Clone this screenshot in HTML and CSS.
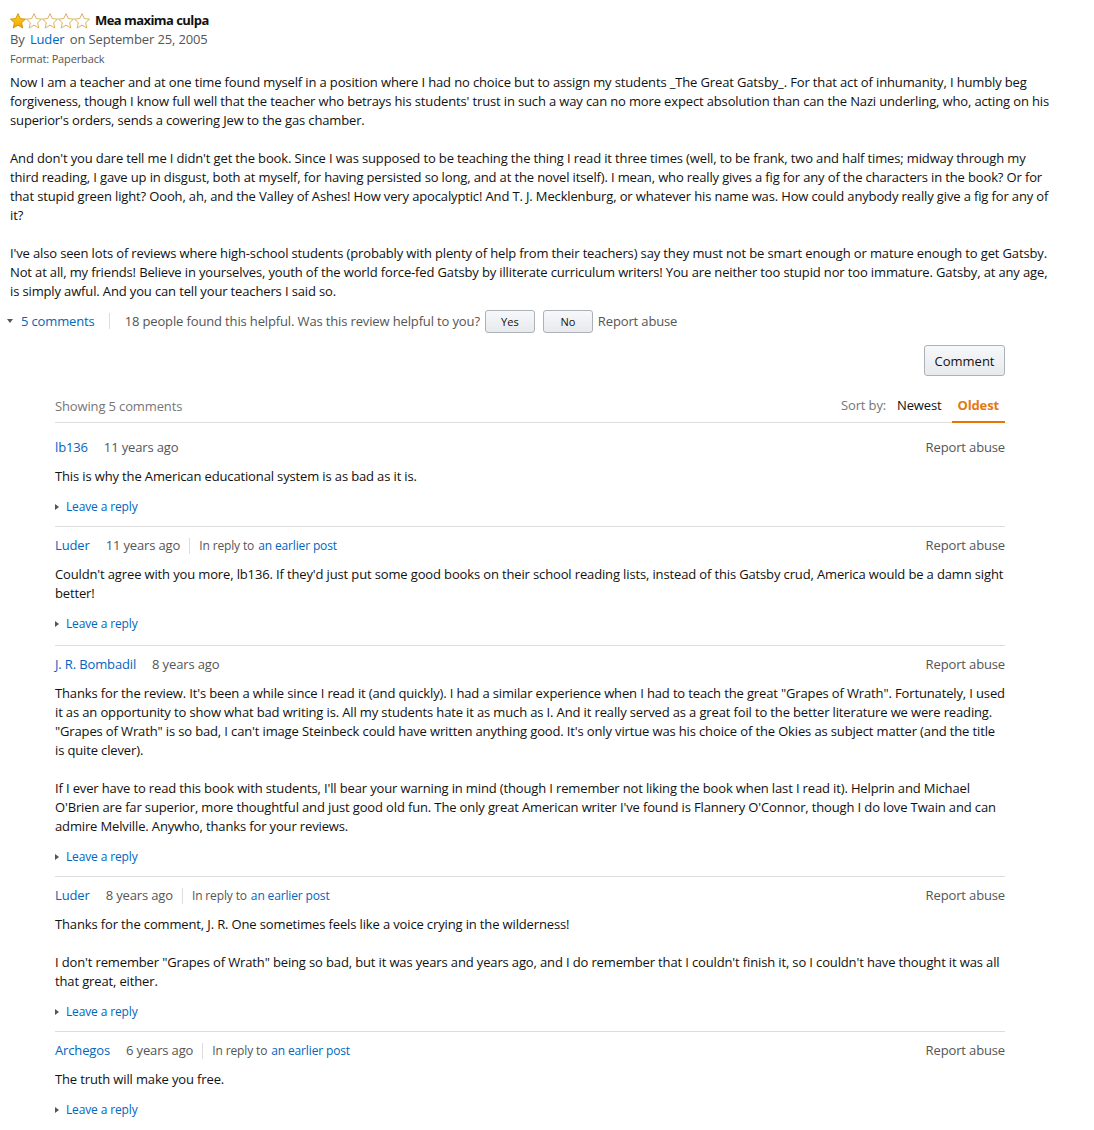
FILE: index.html
```html
<!DOCTYPE html>
<html>
<head>
<meta charset="utf-8">
<link rel="stylesheet" href="styles.css">
</head>
<body>
<div class="review">
  <div class="title-row">
    <span class="stars">
      <svg width="80" height="16" viewBox="0 0 80 16">
        <defs>
          <linearGradient id="gf" x1="0" y1="0" x2="0" y2="1"><stop offset="0" stop-color="#ffd21a"/><stop offset="1" stop-color="#f3a500"/></linearGradient>
        </defs>
        <path d="M8 0.6l2.3 5 5.3.5-4 3.6 1.2 5.3L8 12.2l-4.8 2.8 1.2-5.3-4-3.6 5.3-.5z" fill="url(#gf)" stroke="#c98a00" stroke-width="0.8" stroke-linejoin="round"/>
        <g fill="none" stroke="#d8a94e" stroke-width="0.9" stroke-linejoin="round">
          <path transform="translate(16 0)" d="M8 0.6l2.3 5 5.3.5-4 3.6 1.2 5.3L8 12.2l-4.8 2.8 1.2-5.3-4-3.6 5.3-.5z"/>
          <path transform="translate(32 0)" d="M8 0.6l2.3 5 5.3.5-4 3.6 1.2 5.3L8 12.2l-4.8 2.8 1.2-5.3-4-3.6 5.3-.5z"/>
          <path transform="translate(48 0)" d="M8 0.6l2.3 5 5.3.5-4 3.6 1.2 5.3L8 12.2l-4.8 2.8 1.2-5.3-4-3.6 5.3-.5z"/>
          <path transform="translate(64 0)" d="M8 0.6l2.3 5 5.3.5-4 3.6 1.2 5.3L8 12.2l-4.8 2.8 1.2-5.3-4-3.6 5.3-.5z"/>
        </g>
      </svg>
    </span>
    <span class="title">Mea maxima culpa</span>
  </div>
  <div class="byline">By <a class="link">Luder</a> on September 25, 2005</div>
  <div class="format">Format: Paperback</div>
  <div class="body">
    <p>Now I am a teacher and at one time found myself in a position where I had no choice but to assign my students _The Great Gatsby_. For that act of inhumanity, I humbly beg forgiveness, though I know full well that the teacher who betrays his students' trust in such a way can no more expect absolution than can the Nazi underling, who, acting on his superior's orders, sends a cowering Jew to the gas chamber.</p>
    <p>And don't you dare tell me I didn't get the book. Since I was supposed to be teaching the thing I read it three times (well, to be frank, two and half times; midway through my third reading, I gave up in disgust, both at myself, for having persisted so long, and at the novel itself). I mean, who really gives a fig for any of the characters in the book? Or for that stupid green light? Oooh, ah, and the Valley of Ashes! How very apocalyptic! And T. J. Mecklenburg, or whatever his name was. How could anybody really give a fig for any of it?</p>
    <p>I've also seen lots of reviews where high-school students (probably with plenty of help from their teachers) say they must not be smart enough or mature enough to get Gatsby. Not at all, my friends! Believe in yourselves, youth of the world force-fed Gatsby by illiterate curriculum writers! You are neither too stupid nor too immature. Gatsby, at any age, is simply awful. And you can tell your teachers I said so.</p>
  </div>
  <div class="helpful-row">
    <a class="link toggle"><span class="tri-down"></span>5 comments</a>
    <span class="divider"></span>
    <span class="helpful">18 people found this helpful. Was this review helpful to you?</span>
    <button class="small-btn">Yes</button>
    <button class="small-btn">No</button>
    <span class="report">Report abuse</span>
  </div>
</div>

<div class="comments">
  <div class="comment-btn-row"><button class="comment-btn">Comment</button></div>
  <div class="sort-bar">
    <span class="showing">Showing 5 comments</span>
    <div class="sort">
      <span class="sort-label">Sort by:</span>
      <span class="sort-opt">Newest</span>
      <span class="sort-opt active">Oldest</span>
    </div>
  </div>

  <div class="comment first">
    <div class="c-head">
      <div class="c-meta"><a class="link">lb136</a><span class="age">11 years ago</span></div>
      <span class="report">Report abuse</span>
    </div>
    <div class="c-body"><p>This is why the American educational system is as bad as it is.</p></div>
    <div class="reply"><span class="tri-right"></span><a class="link">Leave a reply</a></div>
  </div>

  <div class="comment second">
    <div class="c-head">
      <div class="c-meta"><a class="link">Luder</a><span class="age">11 years ago</span><span class="vsep"></span><span class="inreply">In reply to</span><a class="link small">an earlier post</a></div>
      <span class="report">Report abuse</span>
    </div>
    <div class="c-body"><p>Couldn't agree with you more, lb136. If they'd just put some good books on their school reading lists, instead of this Gatsby crud, America would be a damn sight better!</p></div>
    <div class="reply"><span class="tri-right"></span><a class="link">Leave a reply</a></div>
  </div>

  <div class="comment">
    <div class="c-head">
      <div class="c-meta"><a class="link">J. R. Bombadil</a><span class="age">8 years ago</span></div>
      <span class="report">Report abuse</span>
    </div>
    <div class="c-body">
      <p>Thanks for the review. It's been a while since I read it (and quickly). I had a similar experience when I had to teach the great "Grapes of Wrath". Fortunately, I used it as an opportunity to show what bad writing is. All my students hate it as much as I. And it really served as a great foil to the better literature we were reading. "Grapes of Wrath" is so bad, I can't image Steinbeck could have written anything good. It's only virtue was his choice of the Okies as subject matter (and the title is quite clever).</p>
      <p>If I ever have to read this book with students, I'll bear your warning in mind (though I remember not liking the book when last I read it). Helprin and Michael O'Brien are far superior, more thoughtful and just good old fun. The only great American writer I've found is Flannery O'Connor, though I do love Twain and can admire Melville. Anywho, thanks for your reviews.</p>
    </div>
    <div class="reply"><span class="tri-right"></span><a class="link">Leave a reply</a></div>
  </div>

  <div class="comment">
    <div class="c-head">
      <div class="c-meta"><a class="link">Luder</a><span class="age">8 years ago</span><span class="vsep"></span><span class="inreply">In reply to</span><a class="link small">an earlier post</a></div>
      <span class="report">Report abuse</span>
    </div>
    <div class="c-body">
      <p>Thanks for the comment, J. R. One sometimes feels like a voice crying in the wilderness!</p>
      <p>I don't remember "Grapes of Wrath" being so bad, but it was years and years ago, and I do remember that I couldn't finish it, so I couldn't have thought it was all that great, either.</p>
    </div>
    <div class="reply"><span class="tri-right"></span><a class="link">Leave a reply</a></div>
  </div>

  <div class="comment last">
    <div class="c-head">
      <div class="c-meta"><a class="link">Archegos</a><span class="age">6 years ago</span><span class="vsep"></span><span class="inreply">In reply to</span><a class="link small">an earlier post</a></div>
      <span class="report">Report abuse</span>
    </div>
    <div class="c-body"><p>The truth will make you free.</p></div>
    <div class="reply"><span class="tri-right"></span><a class="link">Leave a reply</a></div>
  </div>
</div>
</body>
</html>
```

FILE: styles.css
```css
* { box-sizing: border-box; }
body {
  margin: 0;
  padding: 10px 44px 0 10px;
  font-family: "Open Sans", "Noto Sans", Arial, sans-serif;
  font-size: 13px;
  line-height: 19px;
  letter-spacing: -0.14px;
  color: #111;
  background: #fff;
}
p { margin: 0; }
.link { color: #0066c0; text-decoration: none; cursor: pointer; }

.title-row { display: flex; align-items: center; height: 19px; margin-top: 1px; }
.stars { display: inline-flex; width: 80px; height: 16px; margin-right: 5px; }
.title { font-weight: 700; font-size: 13px; color: #111; letter-spacing: -0.55px; }
.byline { color: #555; }
.byline .link { margin: 0 2px; }
.format { font-size: 11px; color: #555; line-height: 20px; }
.body { margin-top: 4px; }
.body p + p { margin-top: 19px; }

.helpful-row { display: flex; align-items: center; margin-top: 8px; height: 24px; color: #555; }
.toggle { display: inline-flex; align-items: center; }
.tri-down { width: 0; height: 0; border-left: 3px solid transparent; border-right: 3px solid transparent; border-top: 4px solid #555; margin: 0 8px 0 -3px; }
.divider { width: 1px; height: 16px; background: #ddd; margin: 0 15px 0 14px; }
.helpful { color: #555; margin-right: 5px; }
.small-btn {
  font-family: inherit; font-size: 11px; color: #111; letter-spacing: 0;
  height: 23px; width: 50px; margin-right: 8px;
  border: 1px solid #adb1b8; border-radius: 3px;
  background: linear-gradient(#f7f8fa, #e7e9ec);
  padding: 0;
}
.small-btn + .small-btn { margin-right: 5px; }
.report { color: #555; }

.comments { margin-left: 45px; margin-right: 45px; }
.comment-btn-row { display: flex; justify-content: flex-end; margin-top: 12px; }
.comment-btn {
  font-family: inherit; font-size: 13px; color: #111; letter-spacing: 0;
  height: 31px; width: 81px; padding: 0;
  border: 1px solid #adb1b8; border-radius: 3px;
  background: linear-gradient(#f7f8fa, #e7e9ec);
}
.sort-bar { display: flex; justify-content: space-between; align-items: flex-end; margin-top: 15px; border-bottom: 1px solid #ddd; height: 32px; }
.showing { color: #767676; line-height: 19px; padding-bottom: 6px; }
.sort { display: flex; align-items: flex-end; margin-bottom: -1px; }
.sort-label { color: #767676; padding-bottom: 8px; margin-right: 5px; }
.sort-opt { color: #111; padding: 0 6px 6px; border-bottom: 2px solid transparent; }
.sort-opt.active { color: #e47911; font-weight: 700; border-bottom: 2px solid #e77600; margin-left: 4px; }

.comment { border-bottom: 1px solid #ddd; padding: 9px 0 10px; }
.comment.first { padding-top: 15px; }
.comment.second { padding-bottom: 12px; }
.comment.last { border-bottom: none; }
.c-head { display: flex; justify-content: space-between; align-items: center; height: 19px; }
.c-meta { display: flex; align-items: center; }
.age { color: #555; margin-left: 16px; }
.vsep { width: 1px; height: 16px; background: #ddd; margin: 0 9px; }
.inreply { font-size: 12px; color: #555; margin-right: 4px; }
.link.small { font-size: 12px; }
.c-body { margin-top: 10px; }
.c-body p + p { margin-top: 19px; }
.reply { display: flex; align-items: center; margin-top: 11px; font-size: 12px; line-height: 19px; }
.tri-right { width: 0; height: 0; border-top: 3px solid transparent; border-bottom: 3px solid transparent; border-left: 4px solid #555; margin-right: 7px; }
```
